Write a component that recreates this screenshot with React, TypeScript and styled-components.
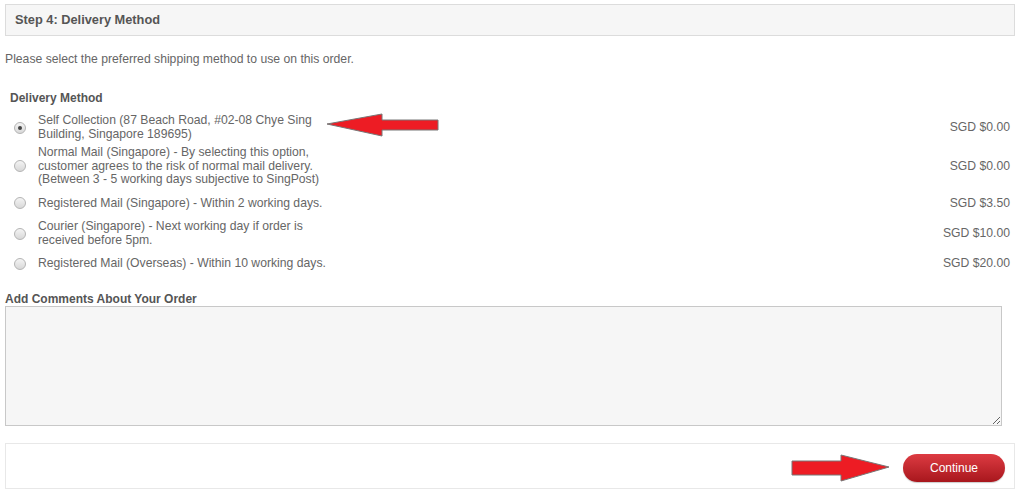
import React from 'react'
import styled, { createGlobalStyle } from "styled-components";

const GlobalStyle = createGlobalStyle`
    body {
        margin: 0;
        background: #fff;
        font-family: "Liberation Sans", Arial, sans-serif;
        font-size: 12.2px;
        color: #666;
    }
`;

const methods = [
    { label: ["Self Collection (87 Beach Road, #02-08 Chye Sing", "Building, Singapore 189695)"], price: "SGD $0.00", checked: true, pad: "9px 0 0" },
    { label: ["Normal Mail (Singapore) - By selecting this option,", "customer agrees to the risk of normal mail delivery.", "(Between 3 - 5 working days subjective to SingPost)"], price: "SGD $0.00", pad: "5px 0" },
    { label: ["Registered Mail (Singapore) - Within 2 working days."], price: "SGD $3.50", pad: "5px 0" },
    { label: ["Courier (Singapore) - Next working day if order is", "received before 5pm."], price: "SGD $10.00", pad: "5px 0" },
    { label: ["Registered Mail (Overseas) - Within 10 working days."], price: "SGD $20.00", pad: "5px 0" },
];

const Arrow = ({ dir }: { dir: "left" | "right" }) => (
    dir === "left" ? (
        <svg width="114" height="25" viewBox="0 0 114 25">
            <polygon points="1,11 56,1 56,7 112,7 112,17 56,17 56,23" fill="#ed1c24" stroke="#777" strokeWidth="1" />
        </svg>
    ) : (
        <svg width="100" height="29" viewBox="0 0 100 29">
            <polygon points="1,7 50,7 50,1 98,13 50,27 50,21 1,21" fill="#ed1c24" stroke="#777" strokeWidth="1" />
        </svg>
    )
);

const App = () => {
    return (
        <PageStyled>
            <GlobalStyle />
            <StepHeader>Step 4: Delivery Method</StepHeader>
            <Intro>Please select the preferred shipping method to use on this order.</Intro>
            <MethodTitle>Delivery Method</MethodTitle>
            <MethodList>
                {methods.map((m, i) => (
                    <MethodRow key={i} $pad={m.pad}>
                        <Radio type="radio" name="shipping" defaultChecked={m.checked} />
                        <MethodLabel>
                            {m.label.map((line, j) => <div key={j}>{line}</div>)}
                        </MethodLabel>
                        <Price>{m.price}</Price>
                    </MethodRow>
                ))}
                <Pointer $left={321} $top={8}><Arrow dir="left" /></Pointer>
            </MethodList>
            <CommentTitle>Add Comments About Your Order</CommentTitle>
            <Comments rows={8} />
            <Buttons>
                <Pointer $left={785} $top={10}><Arrow dir="right" /></Pointer>
                <ContinueButton type="button">Continue</ContinueButton>
            </Buttons>
        </PageStyled>
    )
}

const PageStyled = styled.main`
    padding: 4px 2px 0 5px;
    position: relative;
`;

const StepHeader = styled.h2`
    margin: 0;
    height: 30px;
    line-height: 30px;
    padding-left: 9px;
    border: 1px solid #dcdcdc;
    background: #f6f6f6;
    font-size: 12.8px;
    font-weight: bold;
    color: #555;
`;

const Intro = styled.p`
    margin: 16px 0 0;
    line-height: 14px;
`;

const MethodTitle = styled.h3`
    margin: 25px 0 0;
    padding-left: 5px;
    line-height: 14px;
    font-size: 12px;
    font-weight: bold;
    color: #555;
`;

const MethodList = styled.div`
    position: relative;
`;

const MethodRow = styled.label<{ $pad: string }>`
    display: flex;
    align-items: center;
    padding: ${p => p.$pad};
    padding-right: 5px;
    line-height: 13.5px;
`;

const Radio = styled.input`
    appearance: none;
    width: 12px;
    height: 12px;
    margin: 0 12px 0 9px;
    border-radius: 50%;
    border: 1px solid #b4b4b4;
    background: linear-gradient(#f4f4f4, #d8d8d8);
    position: relative;
    flex-shrink: 0;

    &:checked::after {
        content: "";
        position: absolute;
        left: 3px;
        top: 3px;
        width: 4px;
        height: 4px;
        border-radius: 50%;
        background: #444;
    }
`;

const MethodLabel = styled.div`
    flex: 1;
`;

const Price = styled.span`
    text-align: right;
`;

const Pointer = styled.div<{ $left: number; $top: number }>`
    position: absolute;
    left: ${p => p.$left}px;
    top: ${p => p.$top}px;
    line-height: 0;
`;

const CommentTitle = styled.h3`
    margin: 16px 0 0;
    line-height: 14px;
    font-size: 12px;
    font-weight: bold;
    color: #555;
`;

const Comments = styled.textarea`
    display: block;
    box-sizing: border-box;
    width: 997px;
    height: 120px;
    margin-top: 0;
    border: 1px solid #c8c8c8;
    background: #f6f6f6;
    font-family: inherit;
`;

const Buttons = styled.div`
    position: relative;
    margin-top: 17px;
    border: 1px solid #e8e8e8;
    display: flex;
    justify-content: flex-end;
    align-items: flex-start;
    padding: 10px 9px 0 0;
    box-sizing: border-box;
    height: 46px;
`;

const ContinueButton = styled.button`
    width: 102px;
    height: 28px;
    border: none;
    border-radius: 14px;
    background: linear-gradient(#dd3b42, #a8171d);
    box-shadow: 0 1px 1px rgba(0, 0, 0, 0.2);
    color: #fff;
    font-family: "Liberation Sans", Arial, sans-serif;
    font-size: 12px;
    cursor: pointer;
`;

export default App;
